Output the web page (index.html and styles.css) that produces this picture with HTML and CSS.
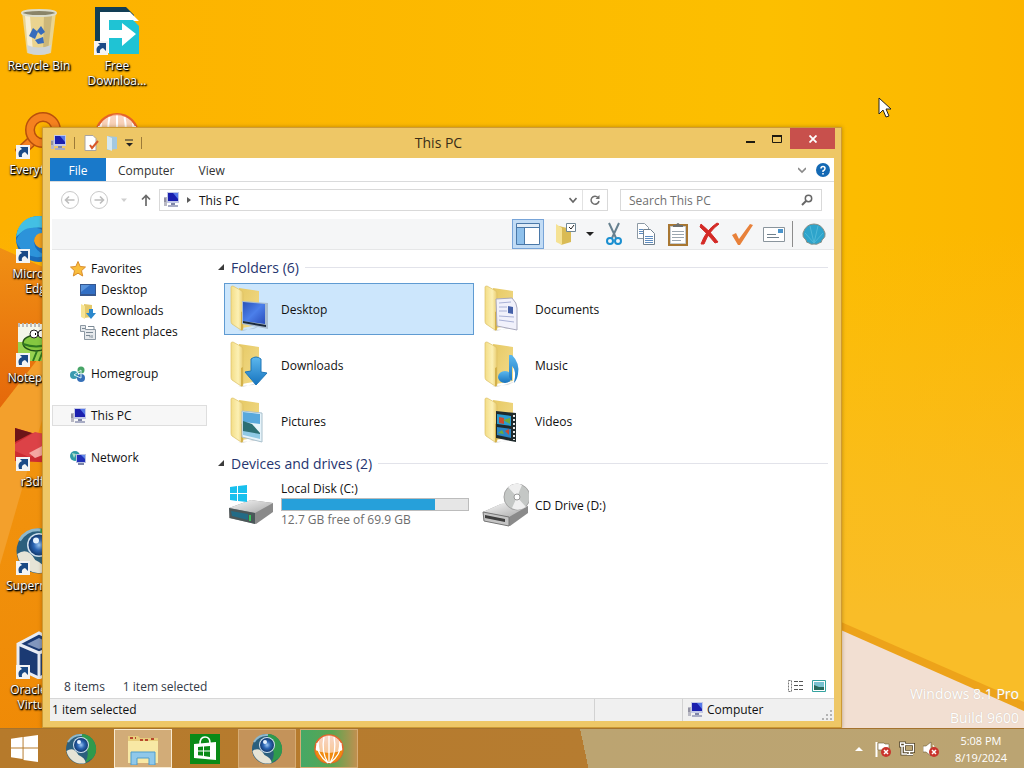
FILE: index.html
```html
<!DOCTYPE html>
<html lang="en">
<head>
    <meta charset="UTF-8">
    <meta name="viewport" content="width=device-width, initial-scale=1.0">
    <title>This PC</title>
    <link rel="stylesheet" href="styles.css">
</head>
<body>
    <!-- shared icons -->
    <svg class="defs" aria-hidden="true">
        <defs>
            <linearGradient id="gFolder" x1="0" x2="1" y1="0" y2="1">
                <stop offset="0" stop-color="#e6c964"/><stop offset="1" stop-color="#f3dc8c"/>
            </linearGradient>
            <linearGradient id="gFront" x1="0" x2="1" y1="0" y2="0">
                <stop offset="0" stop-color="#f3dd86"/><stop offset=".6" stop-color="#fcf0b4"/><stop offset="1" stop-color="#e9cd70"/>
            </linearGradient>
            <linearGradient id="gScreen" x1="0" x2="1" y1="0" y2="1">
                <stop offset="0" stop-color="#2a52b8"/><stop offset=".5" stop-color="#4b7fea"/><stop offset="1" stop-color="#2a4dba"/>
            </linearGradient>
            <linearGradient id="gBlue" x1="0" x2="0" y1="0" y2="1">
                <stop offset="0" stop-color="#5cb8ee"/><stop offset="1" stop-color="#1673be"/>
            </linearGradient>
            <linearGradient id="gMetal" x1="0" x2="1" y1="0" y2="1">
                <stop offset="0" stop-color="#f8f8f8"/><stop offset="1" stop-color="#a8a8a8"/>
            </linearGradient>
            <linearGradient id="gComet" x1="0" x2="0" y1="0" y2="1">
                <stop offset="0" stop-color="#f3b49a"/><stop offset="1" stop-color="#f08a10"/>
            </linearGradient>
            <radialGradient id="gEye">
                <stop offset="0" stop-color="#9cc8f4"/><stop offset=".5" stop-color="#2c66b4"/><stop offset="1" stop-color="#123a70"/>
            </radialGradient>
        </defs>
        <symbol id="pc" viewBox="0 0 16 16">
            <path d="M1 5h3v9H1z" fill="#b9b9c4"/><path d="M1 7h2M1 9h2" stroke="#6b6b80"/>
            <path d="M4 0h12v11H4z" fill="#c3c9e6"/><path d="M5 1h10v8H5z" fill="#1a1fae"/>
            <path d="M10 1h5v6z" fill="#5577e8"/>
            <path d="M8 11h4v2H8z" fill="#7f86a8"/><path d="M5 13h10v2H5z" fill="#a8acc4"/>
        </symbol>
        <symbol id="folder" viewBox="0 0 40 48">
            <path d="M9 45l16-1 8-4-19 6z" fill="#000" opacity=".12"/>
            <path d="M10 3l20 3v34l-17 3z" fill="url(#gFolder)"/>
            <path d="M2 2q0-1 2-1l9 5q1 1 1 3v34q0 3-2 2L3 39q-1-1-1-3z" fill="url(#gFront)" stroke="#dcc065" stroke-width=".7"/>
            <path d="M12 27l2-1v17q0 3-2 2z" fill="#d3b04a"/>
        </symbol>
        <symbol id="orb" viewBox="0 0 32 32">
            <circle cx="16" cy="16" r="15" fill="#2b5f7d"/>
            <path d="M16 1a15 15 0 0 1 12 24l-8 5q5-9 1-15z" fill="#2f9a4c"/>
            <path d="M1.500 18q7-5 12 4 7 3 7 8A15 15 0 0 1 1.500 18z" fill="#e6e4d6"/>
            <path d="M3 9q5-8 14-7" stroke="#8fb8cc" stroke-width="2" fill="none"/>
            <circle cx="16" cy="12" r="8" fill="#cfe0ee"/>
            <circle cx="16" cy="12" r="7" fill="url(#gEye)"/>
            <circle cx="14" cy="9" r="2" fill="#e6f3ff"/>
        </symbol>
        <symbol id="comet" viewBox="0 0 32 32">
            <circle cx="16" cy="16" r="14" fill="#fff" stroke="#e5632a" stroke-width="1.500"/>
            <path d="M16 30C8 24 5 16 6 7q6-5 10-5t10 5c1 9-2 17-10 23z" fill="url(#gComet)" opacity=".55"/>
            <path d="M2 17q14 6 28 0-2 12-14 13Q4 29 2 17z" fill="#f08a10"/>
            <path d="M15 30C7 24 4 17 4 10M15 30C10 22 9 14 11 4M16 30V3M17 30c5-8 6-16 4-26M17 30c8-6 11-13 11-20" stroke="#fff" stroke-width="1.300" fill="none"/>
        </symbol>
        <symbol id="shortcut" viewBox="0 0 14 14">
            <path d="M0 0h14v14H0z" fill="#f4f4f4"/>
            <path d="M3 12q-2-6 3-8L4 2h8v8L9 7q-4 1-3 5z" fill="#1b4a86"/>
        </symbol>
        <symbol id="winlogo" viewBox="0 0 28 28">
            <path d="M0 4l12-2v11H0zM13 2l15-2v13H13zM0 14h12v11L0 23zM13 14h15v14l-15-2z" fill="currentColor"/>
        </symbol>
        <symbol id="badge" viewBox="0 0 10 10">
            <circle cx="5" cy="5" r="5" fill="#c9342c"/><path d="M3 3l4 4M7 3L3 7" stroke="#fff" stroke-width="1.500"/>
        </symbol>
    </svg>

    <svg class="wallpaper" viewBox="0 0 1024 768" preserveAspectRatio="none" aria-hidden="true">
        <defs>
            <linearGradient id="gWall" x1="0" x2="1" y1="0" y2="0">
                <stop offset="0" stop-color="#fdb100"/><stop offset=".75" stop-color="#fcbf00"/><stop offset="1" stop-color="#fcb600"/>
            </linearGradient>
            <linearGradient id="gLow" x1="0" x2="0" y1="0" y2="1">
                <stop offset=".3" stop-color="#f9bd28" stop-opacity="0"/><stop offset=".8" stop-color="#f9bd28"/>
            </linearGradient>
            <linearGradient id="gDark" x1="0" x2="0" y1="0" y2="1">
                <stop offset="0" stop-color="#f09014"/><stop offset="1" stop-color="#e5680a"/>
            </linearGradient>
            <linearGradient id="gLeft" x1="0" x2="0" y1="0" y2="1">
                <stop offset="0" stop-color="#f39a14"/><stop offset="1" stop-color="#ef8905"/>
            </linearGradient>
        </defs>
        <rect width="1024" height="768" fill="url(#gWall)"/>
        <rect width="1024" height="768" fill="url(#gLow)"/>
        <path d="M0 248L45 268V768H0z" fill="url(#gLeft)"/>
        <path d="M0 248L45 268V350L0 408z" fill="url(#gDark)"/>
        <path d="M0 408L45 350V410L0 565z" fill="#f3a02c"/>
        <path d="M800 604L1024 702V768H800z" fill="#eda31a"/>
        <path d="M800 612L1024 711V768H800z" fill="#f2dfd2"/>
    </svg>

    <main class="desktop">
        <div class="desktop-icons">
            <a href="#" class="shortcut">
                <span class="pic"><svg viewBox="0 0 48 48">
                    <path d="M7 5h34l-5 41q-12 4-24 0z" fill="#e6d9a8" opacity=".85"/>
                    <path d="M29 8l8 1-4 35-5 2z" fill="#b8a46a" opacity=".6"/>
                    <path d="M10 8l5 1 3 36-5-1z" fill="#fff" opacity=".6"/>
                    <path d="M12 38q12 5 24 0l-1 8q-11 4-22 0z" fill="#cfd4d6"/>
                    <ellipse cx="24" cy="6" rx="17" ry="3" fill="#8a8468" stroke="#dcdccb" stroke-width="2"/>
                    <path d="M14 29l4-8 5 4-3 7zM22 24l4-5 4 6-4 3zM20 33l8-3 1 6-6 1z" fill="#376cbc"/>
                </svg></span>
                <span class="name">Recycle Bin</span>
            </a>
            <a href="#" class="shortcut">
                <span class="pic"><svg viewBox="0 0 48 48">
                    <path d="M2 0h31l8 8v8H16v24H2z" fill="#123e55"/>
                    <path d="M7 5h30l9 9H16v32H7z" fill="#fff"/>
                    <path d="M16 13h24l6 6v28H16z" fill="#1fc3d4"/>
                    <path d="M14 23h15v-7l14 11-14 12v-8H14z" fill="#fff"/>
                </svg><svg class="arrow"><use href="#shortcut"/></svg></span>
                <span class="name">Free Downloa...</span>
            </a>
            <a href="#" class="shortcut">
                <span class="pic"><svg viewBox="0 0 48 48">
                    <path d="M18 29L3 43" stroke="#b8500c" stroke-width="11"/><path d="M18 29L3 43" stroke="#f5811f" stroke-width="8"/>
                    <circle cx="28" cy="19" r="13" fill="none" stroke="#b8500c" stroke-width="10"/>
                    <circle cx="28" cy="19" r="13" fill="none" stroke="#f5811f" stroke-width="7"/>
                </svg><svg class="arrow"><use href="#shortcut"/></svg></span>
                <span class="name">Everything</span>
            </a>
            <a href="#" class="shortcut">
                <span class="pic"><svg viewBox="0 0 48 48">
                    <circle cx="24" cy="24" r="23" fill="#1a6cbb"/>
                    <path d="M1 22Q4 1 25 1q20 2 22 22-1-10-16-10Q12 10 1 22z" fill="#43c0e4"/>
                    <path d="M1 26Q6 11 22 13q7 1 7 6-10-1-10 8 1 10 12 13-10 5-19-1-8-5-11-13z" fill="#2c93da"/>
                    <path d="M19 26q1-9 10-8 8 2 8 9 0 4-5 4-2 0-3 2-8 1-10-7z" fill="#f3a01c"/>
                </svg><svg class="arrow"><use href="#shortcut"/></svg></span>
                <span class="name">Microsoft Edge</span>
            </a>
            <a href="#" class="shortcut">
                <span class="pic"><svg viewBox="0 0 48 48">
                    <path d="M3 5h41v37H3z" fill="#f4f6ea"/><path d="M3 23h41v19H3z" fill="#98d250"/>
                    <path d="M3 6h41" stroke="#bbb" stroke-width="4" stroke-dasharray="2 2"/>
                    <ellipse cx="21" cy="24" rx="13" ry="8" fill="#85c840" stroke="#224f18" stroke-width="1.500"/>
                    <circle cx="19" cy="15" r="4" fill="#fff" stroke="#222"/><circle cx="27" cy="15" r="4" fill="#fff" stroke="#222"/>
                    <path d="M20 15h1M28 15h1" stroke="#000" stroke-width="2"/>
                    <path d="M8 25q14 5 25 0M18 42l4-10M24 42l4-10M31 42l3-9" stroke="#2e7820" stroke-width="2" fill="none"/>
                </svg><svg class="arrow"><use href="#shortcut"/></svg></span>
                <span class="name">Notepad++</span>
            </a>
            <a href="#" class="shortcut">
                <span class="pic"><svg viewBox="0 0 48 48">
                    <path d="M0 5l17 5 29 2v28L0 38z" fill="#cc2c32"/>
                    <path d="M0 5l17 5-17 9z" fill="#6c1518"/><path d="M0 21l20-12 26 6v8L14 34 0 28z" fill="#dc4247"/>
                    <path d="M14 30l32-17v12l-26 10z" fill="#f4a7a1"/>
                </svg><svg class="arrow"><use href="#shortcut"/></svg></span>
                <span class="name">r3dfox</span>
            </a>
            <a href="#" class="shortcut">
                <span class="pic"><svg><use href="#orb"/></svg><svg class="arrow"><use href="#shortcut"/></svg></span>
                <span class="name">Supermium</span>
            </a>
            <a href="#" class="shortcut">
                <span class="pic"><svg viewBox="0 0 48 48">
                    <path d="M3 13L24 2l21 11v24L24 47 3 37z" fill="#1b3a73" stroke="#e8ecf4" stroke-width="3"/>
                    <path d="M3 13l21 9 21-9M24 22v25" stroke="#e8ecf4" stroke-width="3" fill="none"/>
                    <path d="M12 13l12-6 12 6-12 5z" fill="#8196bd"/>
                </svg><svg class="arrow"><use href="#shortcut"/></svg></span>
                <span class="name">Oracle VM Virtua...</span>
            </a>
            <a href="#" class="shortcut second" aria-label="BitComet">
                <span class="pic"><svg><use href="#comet"/></svg></span>
            </a>
        </div>

        <div class="watermark">Windows 8.1 Pro<br>Build 9600</div>

        <section class="window">
            <header class="titlebar">
                <div class="quick">
                    <svg class="i16"><use href="#pc"/></svg>
                    <span class="bar"></span>
                    <button aria-label="Properties"><svg class="i16" viewBox="0 0 16 16"><path d="M2 .5h8l3 3v12H2z" fill="#fff" stroke="#a9a4a0"/><path d="M7 10l2 3 6-7" stroke="#d8572a" stroke-width="2" fill="none"/></svg></button>
                    <button aria-label="New folder"><svg class="i16" viewBox="0 0 16 16"><path d="M3 1l10 1v12l-10 1z" fill="#a3c8e0"/><path d="M3 1l5 2v13l-5-2z" fill="#d4e8f2"/></svg></button>
                    <button aria-label="Customize"><svg class="i8" viewBox="0 0 8 8"><path d="M0 1h8" stroke="#222" /><path d="M1 4h7L4.500 7.500z" fill="#222"/></svg></button>
                    <span class="bar"></span>
                </div>
                <h1>This PC</h1>
                <div class="caption">
                    <button aria-label="Minimize"><svg class="i12" viewBox="0 0 12 12"><path d="M2 9h9" stroke="#1e1a10" stroke-width="2"/></svg></button>
                    <button aria-label="Maximize"><svg class="i12" viewBox="0 0 12 12"><path d="M1.500 2.500h9v7h-9z" fill="none" stroke="#1e1a10"/><path d="M1 3h10" stroke="#1e1a10" stroke-width="2"/></svg></button>
                    <button class="close" aria-label="Close"><svg class="i8" viewBox="0 0 8 8"><path d="M.5.5l7 7M7.500.5l-7 7" stroke="#fff" stroke-width="1.800"/></svg></button>
                </div>
            </header>

            <div class="client">
                <div class="tabs">
                    <button class="file">File</button>
                    <button>Computer</button>
                    <button>View</button>
                    <span class="tab-end">
                        <button aria-label="Expand ribbon"><svg class="i8" viewBox="0 0 8 8"><path d="M0 2l4 4 4-4" fill="none" stroke="#8a8a8a" stroke-width="1.600"/></svg></button>
                        <button aria-label="Help"><svg class="i14" viewBox="0 0 14 14"><circle cx="7" cy="7" r="7" fill="#1469b4"/><path d="M5 5.500Q5 3.500 7 3.500t2 2Q9 7 7 8v1M7 10v1.500" fill="none" stroke="#fff" stroke-width="1.500"/></svg></button>
                    </span>
                </div>

                <div class="navrow">
                    <button aria-label="Back"><svg class="i20" viewBox="0 0 20 20"><circle cx="10" cy="10" r="8.500" fill="none" stroke="#c9c9c9"/><path d="M14.500 10h-9M9 6.500L5.500 10 9 13.500" fill="none" stroke="#bdbdbd" stroke-width="1.600"/></svg></button>
                    <button aria-label="Forward"><svg class="i20" viewBox="0 0 20 20"><circle cx="10" cy="10" r="8.500" fill="none" stroke="#c9c9c9"/><path d="M5.500 10h9M11 6.500l3.500 3.500-3.500 3.500" fill="none" stroke="#bdbdbd" stroke-width="1.600"/></svg></button>
                    <button class="recent" aria-label="Recent locations"><svg class="i8" viewBox="0 0 8 8"><path d="M1 2.500h6L4 6z" fill="#cfcfcf"/></svg></button>
                    <button class="up" aria-label="Up"><svg class="i14" viewBox="0 0 14 14"><path d="M7 13V2.500M3 6.500l4-4 4 4" fill="none" stroke="#6a6a6a" stroke-width="1.700"/></svg></button>
                    <div class="address">
                        <svg class="i16"><use href="#pc"/></svg>
                        <svg class="i8" viewBox="0 0 8 8"><path d="M2 1l4 3-4 3z" fill="#5a5a5a"/></svg>
                        <a href="#">This PC</a>
                        <button class="drop" aria-label="Previous locations"><svg class="i8" viewBox="0 0 8 8"><path d="M.5 2L4 6l3.500-4" fill="none" stroke="#666" stroke-width="1.600"/></svg></button>
                        <button class="refresh" aria-label="Refresh"><svg class="i12" viewBox="0 0 12 12"><path d="M9 3.500A4 4 0 1 0 10 7" fill="none" stroke="#6f6f6f" stroke-width="1.500"/><path d="M10.500 1v4h-4z" fill="#6f6f6f"/></svg></button>
                    </div>
                    <label class="search">
                        <input type="text" placeholder="Search This PC" aria-label="Search This PC">
                        <svg class="i12" viewBox="0 0 12 12"><circle cx="7.500" cy="4.500" r="3.200" fill="none" stroke="#666" stroke-width="1.500"/><path d="M5 7L1 11" stroke="#666" stroke-width="2"/></svg>
                    </label>
                </div>

                <div class="toolbar">
                    <button class="pressed" aria-label="Navigation pane"><svg viewBox="0 0 24 24"><path d="M.5 1.500h23v21H.5z" fill="#fff" stroke="#4a78a8"/><path d="M1 5.500h22M8.500 6v16" stroke="#4a78a8"/><path d="M1 6h7v16H1z" fill="#8fc1ec"/><path d="M1 2h22v3H1z" fill="#e0ecf7"/></svg></button>
                    <button aria-label="Select"><svg viewBox="0 0 24 24"><path d="M5 4l12 3v13l-10 3z" fill="#d9bb55"/><path d="M2 2l6 4v17l-6-3z" fill="#f5e294"/><path d="M12.500 1.500h9v8h-9z" fill="#fff" stroke="#6f8694"/><path d="M15 5l2 2 3-4" fill="none" stroke="#222"/></svg></button>
                    <button class="more" aria-label="More select options"><svg class="i8" viewBox="0 0 8 8"><path d="M0 2h8L4 6z" fill="#222"/></svg></button>
                    <button aria-label="Cut"><svg viewBox="0 0 24 24"><path d="M7 1l7 15M17 1l-7 15" stroke="#66808f" stroke-width="2"/><circle cx="8" cy="19" r="3" fill="none" stroke="#1a8fd0" stroke-width="2"/><circle cx="16" cy="19" r="3" fill="none" stroke="#1a8fd0" stroke-width="2"/></svg></button>
                    <button aria-label="Copy"><svg viewBox="0 0 24 24"><path d="M3.500 1.500h7l4 4v11h-11z" fill="#fff" stroke="#8d9aa5"/><path d="M9.500 7.500h7l4 4v11h-11z" fill="#fff" stroke="#71818e"/><path d="M5 7.500h4M5 9.500h4M5 11.500h4M11 14.500h8M11 16.500h8M11 18.500h8M11 20.500h8" stroke="#5d8cc0"/></svg></button>
                    <button aria-label="Paste"><svg viewBox="0 0 24 24"><path d="M2 2h20v22H2z" fill="#a87732"/><path d="M4.500 4.500h15v17h-15z" fill="#fff" stroke="#c5ccd2"/><path d="M7 5V3h3q2-4 4 0h3v2z" fill="#6e706e"/><path d="M6 9.500h12M6 12.500h12M6 15.500h12M6 18.500h9" stroke="#9aa6b0"/></svg></button>
                    <button aria-label="Delete"><svg viewBox="0 0 24 24"><path d="M3 2q9 7 17 18l-3 1Q10 12 2 5zM21 2Q11 9 6 22H3Q8 8 19 1z" fill="#d42a26" stroke="#d42a26"/></svg></button>
                    <button aria-label="Rename"><svg viewBox="0 0 24 24"><path d="M2 13l4-2 3 6L20 2l3 1-13 20H8z" fill="#e8813a"/></svg></button>
                    <button aria-label="Properties"><svg viewBox="0 0 24 24"><path d="M1.500 5.500h21v14h-21z" fill="#fff" stroke="#8a959d"/><path d="M16 7h5v4h-5z" fill="#4a94cc"/><path d="M5 12.500h9M5 15.500h12" stroke="#6f7f8b"/></svg></button>
                    <span class="rule"></span>
                    <button aria-label="Classic Shell settings"><svg viewBox="0 0 24 24"><path d="M7 21q-3 0-3-3-4-3-3-7Q4 2 12 2t11 9q1 4-3 7 0 3-3 3-2 2-5 1-3 1-5-1z" fill="#2ea4cb" stroke="#8b8f86"/><path d="M12 21L3 11M12 21L8 4M12 21l4-17M12 21l9-10" stroke="#4fb8d8"/></svg></button>
                </div>

                <div class="content">
                    <nav class="sidebar">
                        <ul>
                            <li><a href="#"><svg class="i16" viewBox="0 0 16 16"><path d="M8 .5l2.200 5 5.300.5-4 3.700 1.200 5.300L8 12.200 3.300 15l1.200-5.300L.5 6l5.300-.5z" fill="#f9bd3c" stroke="#d98c2b"/></svg>Favorites</a></li>
                            <li class="sub"><a href="#"><svg class="i16" viewBox="0 0 16 16"><path d="M0 2h16v12H0z" fill="#36578f"/><path d="M1 3h14v9H1z" fill="#326fc4"/><path d="M1 3h9l-9 7z" fill="#5a94dc"/></svg>Desktop</a></li>
                            <li class="sub"><a href="#"><svg class="i16" viewBox="0 0 16 16"><path d="M4 1l8 1v12l-8 1z" fill="#e4c869"/><path d="M1 1l4 2v13l-4-2z" fill="#f7e493"/><path d="M9 6h4v4h3l-5 6-5-6h3z" fill="#2c88cc"/></svg>Downloads</a></li>
                            <li class="sub"><a href="#"><svg class="i16" viewBox="0 0 16 16"><path d="M.5 1.500h5v4h10v10h-11v-8h-4z" fill="#e6e9ec" stroke="#8c98a3"/><path d="M6 8.500h7M6 11.500h4v2M12 11v3M8 2.500h6v3M2 4.500h3" stroke="#7b8995" fill="none"/></svg>Recent places</a></li>
                        </ul>
                        <ul><li><a href="#"><svg class="i16" viewBox="0 0 16 16"><circle cx="4" cy="9" r="4" fill="#3b9ab0"/><circle cx="11" cy="4" r="3.500" fill="#48a567"/><circle cx="11" cy="12" r="4" fill="#3670b8"/><path d="M4 9l7-5v8z" fill="none" stroke="#d4eef4"/></svg>Homegroup</a></li></ul>
                        <ul><li class="current"><a href="#"><svg class="i16"><use href="#pc"/></svg>This PC</a></li></ul>
                        <ul><li><a href="#"><svg class="i16" viewBox="0 0 16 16"><circle cx="5" cy="6" r="5" fill="#2e9aa6"/><path d="M2 3l4 1-2 4z" fill="#a8e0c8"/><path d="M6 4h10v9H6z" fill="#b8c0e0"/><path d="M7 5h8v7H7z" fill="#2130b8"/><path d="M11 5h4v4z" fill="#5f86ea"/><path d="M8 14h6" stroke="#7b84a8" stroke-width="2"/></svg>Network</a></li></ul>
                    </nav>

                    <div class="files">
                        <h2><svg class="i8" viewBox="0 0 8 8"><path d="M7 1v6H1z" fill="#3b3b3b"/></svg>Folders (6)</h2>
                        <div class="tiles">
                            <a href="#" class="tile selected">
                                <span class="thumb"><svg viewBox="0 0 40 48"><use href="#folder" width="40" height="48"/><path d="M13 16l26 2v26l-26-5z" fill="#a9bdd0"/><path d="M14 17l22 2v20l-22-3z" fill="url(#gScreen)"/><path d="M14 36l23 4v2l-23-4z" fill="#1a2a3c"/></svg></span>
                                Desktop
                            </a>
                            <a href="#" class="tile">
                                <span class="thumb"><svg viewBox="0 0 40 48"><use href="#folder" width="40" height="48"/><path d="M13 14l16-1q5 5 5 10v22l-20-4z" fill="#f1f1fb" stroke="#a9a9bd"/><path d="M16 18l12-1M16 22h8M16 26h8M16 31l15 1M16 35l15 2" stroke="#a9b1d6"/><path d="M25 21l5 1v7l-5-1z" fill="#4560a8"/></svg></span>
                                Documents
                            </a>
                            <a href="#" class="tile">
                                <span class="thumb"><svg viewBox="0 0 40 48"><use href="#folder" width="40" height="48"/><path d="M22 18q5-4 10 0v13l6 1-11 12-11-13 6-1z" fill="url(#gBlue)" stroke="#1f77b8"/></svg></span>
                                Downloads
                            </a>
                            <a href="#" class="tile">
                                <span class="thumb"><svg viewBox="0 0 40 48"><use href="#folder" width="40" height="48"/><ellipse cx="22" cy="36" rx="7" ry="6" fill="url(#gBlue)"/><path d="M26 36V14h3q8 8 6 19-1 6-4 9 3-12-2-17v15z" fill="url(#gBlue)"/></svg></span>
                                Music
                            </a>
                            <a href="#" class="tile">
                                <span class="thumb"><svg viewBox="0 0 40 48"><use href="#folder" width="40" height="48"/><path d="M13 14l20 2v29l-20-5z" fill="#e6f3fa" stroke="#a9c0cc"/><path d="M14 15l17 2v10l-17-2z" fill="#58a8dc"/><path d="M14 24l9 3 8 9v5l-17-4z" fill="#2c6f74"/><path d="M14 34l17 3v5l-17-4z" fill="#8fc9e4"/></svg></span>
                                Pictures
                            </a>
                            <a href="#" class="tile">
                                <span class="thumb"><svg viewBox="0 0 40 48"><use href="#folder" width="40" height="48"/><path d="M13 14l20 2v29l-20-4z" fill="#1f2a2c"/><path d="M14 17l14 2v10l-14-2z" fill="#2b9ccf"/><path d="M14 30l14 2v9l-14-3z" fill="#2b86c4"/><path d="M16 20l5 1v6l-5-1zM22 34l4-2v6z" fill="#c94a2e"/><path d="M20 23l7-2v6zM15 36l4-3 2 4z" fill="#6cab3d"/><path d="M31 18v25" stroke="#e8e8e8" stroke-width="2" stroke-dasharray="2 2"/></svg></span>
                                Videos
                            </a>
                        </div>
                        <h2><svg class="i8" viewBox="0 0 8 8"><path d="M7 1v6H1z" fill="#3b3b3b"/></svg>Devices and drives (2)</h2>
                        <div class="tiles">
                            <a href="#" class="tile drive">
                                <span class="thumb"><svg viewBox="0 0 48 48"><path d="M2 27l22-8 22 3v9L29 43 2 37z" fill="#8a8a8a"/><path d="M2 27l22-8 22 3-18 10z" fill="url(#gMetal)"/><path d="M2 27l26 5v11L3 37z" fill="#4b5759"/><path d="M4 30l17 3v6L5 35z" fill="#236b86"/><path d="M23 34v6" stroke="#36c25a" stroke-width="2"/><path d="M3 6l7-1v7H3zM11 5l9-1v8h-9zM3 13h7v7l-7-1zM11 13h9v8l-9-1z" fill="#18c0ee"/></svg></span>
                                <span class="info">
                                    <span>Local Disk (C:)</span>
                                    <span class="usage"><span class="used" style="width: 82%"></span></span>
                                    <span class="free">12.7 GB free of 69.9 GB</span>
                                </span>
                            </a>
                            <a href="#" class="tile drive">
                                <span class="thumb"><svg viewBox="0 0 48 48"><path d="M2 31l18-8 27 2v7L29 45 3 40z" fill="#8a8a8a"/><path d="M2 31l20-9 25 3-19 11z" fill="url(#gMetal)"/><path d="M2 31l26 5v9L3 40z" fill="#c4c4c4" stroke="#777"/><path d="M4 34l20 4v3L4 37z" fill="#3e3e3e"/><circle cx="36" cy="16" r="13" fill="#c4c7c5" stroke="#a3a3a3"/><path d="M36 16L27 6q8-6 14-2zM36 16l9 10q-8 5-14 1z" fill="#efefef"/><circle cx="36" cy="16" r="3" fill="#fff" stroke="#999"/></svg></span>
                                CD Drive (D:)
                            </a>
                        </div>
                    </div>
                </div>

                <div class="details">
                    <span>8 items</span>
                    <span>1 item selected</span>
                    <span class="views">
                        <button aria-label="Details view"><svg class="i16" viewBox="0 0 16 16"><path d="M.5 2.500h3v11h-3z" fill="#fff" stroke="#777" stroke-dasharray="2 1"/><path d="M6 3.500h10M6 7.500h10M6 11.500h10" stroke="#555" stroke-dasharray="4 1"/></svg></button>
                        <button aria-label="Large icons view"><svg class="i14" viewBox="0 0 14 14"><path d="M.5 1.500h13v11H.5z" fill="#fff" stroke="#35a3a0"/><path d="M2 3h10v5H2z" fill="#79c2d0"/><path d="M2 6l5 2h5v3H2z" fill="#276a5c"/></svg></button>
                    </span>
                </div>
                <footer class="status">
                    <span class="msg">1 item selected</span>
                    <span class="cell"></span>
                    <span class="cell zone"><svg class="i16"><use href="#pc"/></svg>Computer</span>
                    <svg class="i12 grip" viewBox="0 0 12 12"><path d="M9 1v2M9 5v2M9 9v2M5 5v2M5 9v2M1 9v2" stroke="#b4b4b4" stroke-width="2"/></svg>
                </footer>
            </div>
        </section>

        <svg class="cursor" viewBox="0 0 14 22"><path d="M1 1v16l4-4 3 7 3-1-3-7h5z" fill="#fff" stroke="#222"/></svg>
    </main>

    <footer class="taskbar">
        <button class="start" aria-label="Start"><svg><use href="#winlogo"/></svg></button>
        <button class="task" aria-label="Supermium"><svg><use href="#orb"/></svg></button>
        <button class="task open active" aria-label="File Explorer"><svg viewBox="0 0 32 32"><path d="M1 3h10l2 2h18v25H1z" fill="#e8cd7c"/><path d="M1 8h30v22H1z" fill="#f8e8a4"/><path d="M3 5h6M13 7h8M24 6h5" stroke="#b8482c" stroke-width="2" stroke-dasharray="3 2"/><path d="M4 32V19h24v13h-6v-7H10v7z" fill="#8fc8ea" stroke="#4e9dcc"/></svg></button>
        <button class="task" aria-label="Store"><svg viewBox="0 0 32 32"><path d="M1 1h30v30H1z" fill="#0a8a17"/><path d="M5 11l22-2v18L5 25z" fill="#fff"/><path d="M11 11q0-7 5-7t5 6" fill="none" stroke="#fff" stroke-width="1.600"/><path d="M9 14l5-.5v4H9zM15 13.500l6-.5v4.500h-6zM9 18.500h5v4.300l-5-.5zM15 18.500h6V24l-6-1z" fill="#0a8a17"/></svg></button>
        <button class="task open" aria-label="Supermium window"><svg><use href="#orb"/></svg></button>
        <button class="task open green" aria-label="BitComet"><svg><use href="#comet"/></svg></button>
        <div class="tray">
            <button aria-label="Show hidden icons"><svg class="i8" viewBox="0 0 8 8"><path d="M0 6h8L4 2z" fill="#fff"/></svg></button>
            <button aria-label="Action Center"><svg class="i16" viewBox="0 0 16 16"><path d="M1.500 1v15" stroke="#fff" stroke-width="2"/><path d="M3 2h6l1 1h4v7H9L8 9H3z" fill="#fff" stroke="#6c5a38" stroke-width=".6"/><use href="#badge" x="6" y="6" width="10" height="10"/></svg></button>
            <button aria-label="Network"><svg class="i16" viewBox="0 0 16 16"><path d="M5.500 3.500h9v7h-9zM8 13.500h6M10.500 10.500v3M1.500 2h4v3h-4zM3 5v8h5" fill="none" stroke="#554628" stroke-width="3"/><path d="M5.500 3.500h9v7h-9zM8 13.500h6M10.500 10.500v3M1.500 2h4v3h-4zM3 5v8h5" fill="none" stroke="#fff" stroke-width="1.300"/></svg></button>
            <button aria-label="Volume"><svg class="i16" viewBox="0 0 16 16"><path d="M0 5h3l5-4v14l-5-4H0z" fill="#fff" stroke="#6c5a38" stroke-width=".6"/><path d="M10 4q3 3 1 8" stroke="#fff" fill="none"/><use href="#badge" x="6" y="6" width="10" height="10"/></svg></button>
            <time class="clock">5:08 PM<br>8/19/2024</time>
        </div>
    </footer>
</body>
</html>
```
FILE: styles.css
```css
* {
    box-sizing: border-box;
    margin: 0;
    padding: 0;
}

body {
    display: flex;
    flex-direction: column;
    height: 100vh;
    overflow: hidden;
    font-family: "Open Sans", "Noto Sans", sans-serif;
    font-size: 12px;
    line-height: 15px;
    color: #111;
    background-color: #fdb900;
}

button {
    display: flex;
    align-items: center;
    justify-content: center;
    border: none;
    background: none;
    font: inherit;
    color: inherit;
}

a {
    color: inherit;
    text-decoration: none;
}

ul {
    list-style: none;
}

svg {
    display: block;
    flex-shrink: 0;
}

.defs {
    position: absolute;
    width: 0;
    height: 0;
}

.i8 { width: 8px; height: 8px; }
.i12 { width: 12px; height: 12px; }
.i14 { width: 14px; height: 14px; }
.i16 { width: 16px; height: 16px; }
.i20 { width: 20px; height: 20px; }

.wallpaper {
    position: absolute;
    width: 100%;
    height: 100%;
}

/* desktop */
.desktop {
    position: relative;
    flex: 1;
    min-height: 0;
}

.desktop-icons {
    display: grid;
    grid-template-rows: repeat(7, 104px);
    grid-auto-columns: 78px;
}

.shortcut {
    grid-column: 1;
    display: flex;
    flex-direction: column;
    align-items: center;
    gap: 3px;
    padding: 7px 6px 0;
    color: #fff;
    text-align: center;
    text-shadow: 1px 1px 2px #000, 0 1px 2px #000, 1px 1px 1px #000;
}

.shortcut:nth-child(2) {
    grid-column: 2;
    grid-row: 1;
}

.shortcut.second {
    grid-column: 2;
    grid-row: 2;
}

.pic {
    position: relative;
    width: 48px;
    height: 48px;
}

.pic svg {
    width: 48px;
    height: 48px;
}

.pic .arrow {
    position: absolute;
    left: 1px;
    bottom: 0;
    width: 14px;
    height: 14px;
}

.watermark {
    position: absolute;
    right: 5px;
    bottom: -2px;
    text-align: right;
    font-size: 14px;
    line-height: 24px;
    color: #fff;
    text-shadow: 0 0 1px #c8b8a8;
}

.cursor {
    position: absolute;
    left: 878px;
    top: 97px;
    width: 14px;
    height: 22px;
}

/* window */
.window {
    position: absolute;
    inset: 127px 182px 0 42px;
    display: flex;
    flex-direction: column;
    padding: 0 7px 6px;
    border: 1px solid #cd9a35;
    background-color: #eec766;
    box-shadow: 0 0 4px rgba(90, 60, 0, 0.4);
}

.titlebar {
    display: grid;
    grid-template-columns: 1fr auto 1fr;
    height: 30px;
    margin-right: -1px;
}

.titlebar h1 {
    padding-right: 8px;
    font-size: 14px;
    font-weight: normal;
    line-height: 30px;
    color: #3a2e18;
}

.quick {
    display: flex;
    align-items: center;
    gap: 5px;
}

.quick .bar {
    width: 1px;
    height: 12px;
    margin: 0 3px;
    background-color: #9c7a38;
}

.caption {
    display: flex;
    justify-content: flex-end;
    align-items: flex-start;
}

.caption button {
    width: 27px;
    height: 21px;
}

.caption .close {
    width: 45px;
    background-color: #c8504c;
}

.client {
    flex: 1;
    min-height: 0;
    display: flex;
    flex-direction: column;
    background-color: #fff;
}

.tabs {
    display: flex;
    height: 24px;
    border-bottom: 1px solid #dadbdc;
    color: #333;
}

.tabs button {
    padding: 2px 12px 0;
}

.tabs .file {
    width: 56px;
    background-color: #1979ca;
    color: #fff;
}

.tab-end {
    display: flex;
    gap: 10px;
    margin-left: auto;
    padding-right: 4px;
}

.tab-end button {
    padding: 0;
}

.navrow {
    display: flex;
    align-items: center;
    gap: 9px;
    height: 36px;
    padding: 0 12px 0 10px;
}

.recent {
    padding: 0 2px;
}

.address,
.search {
    display: flex;
    align-items: center;
    height: 22px;
    border: 1px solid #d9d9d9;
}

.address {
    flex: 1;
    gap: 6px;
    padding-left: 3px;
    margin: 0 3px 0 -3px;
}

.address .drop {
    width: 18px;
    height: 20px;
    margin-left: auto;
}

.address .refresh {
    width: 25px;
    height: 20px;
    margin-left: -6px;
    border-left: 1px solid #e2e2e2;
}

.search {
    width: 202px;
    padding: 0 8px;
}

.search input {
    flex: 1;
    min-width: 0;
    border: none;
    outline: none;
    background: none;
    font: inherit;
}

.search input::placeholder {
    color: #707070;
}

.toolbar {
    display: flex;
    justify-content: flex-end;
    align-items: center;
    height: 31px;
    margin: 1px 0 0 2px;
    padding-right: 4px;
    border-bottom: 1px solid #e6e7e8;
    background-color: #f5f6f7;
}

.toolbar button {
    width: 32px;
    height: 30px;
}

.toolbar svg {
    width: 24px;
    height: 24px;
}

.toolbar .pressed {
    border: 1px solid #77a4d8;
    background-color: #c2dcf5;
    margin-right: 6px;
}

.toolbar .more {
    width: 16px;
}

.toolbar .more svg {
    width: 8px;
    height: 8px;
}

.toolbar .rule {
    width: 1px;
    height: 26px;
    margin: 0 5px 0 2px;
    background-color: #8c8c8c;
}

/* content */
.content {
    flex: 1;
    min-height: 0;
    display: flex;
}

.sidebar {
    display: flex;
    flex-direction: column;
    gap: 21px;
    width: 163px;
    padding: 8px 6px 0 2px;
}

.sidebar a {
    display: flex;
    align-items: center;
    gap: 5px;
    height: 21px;
    padding-left: 18px;
}

.sidebar .sub a {
    padding-left: 28px;
}

.sidebar .current {
    background-color: #f7f7f7;
    box-shadow: inset 0 0 0 1px #dedede;
}

.files {
    flex: 1;
    padding: 1px 6px 0 4px;
}

.files h2 {
    display: flex;
    align-items: center;
    gap: 6px;
    height: 32px;
    font-size: 14px;
    font-weight: normal;
    color: #26356f;
}

.files h2::after {
    content: "";
    flex: 1;
    height: 1px;
    background-color: #e2e3ea;
}

.tiles {
    display: grid;
    grid-template-columns: 250px 250px;
    gap: 4px;
    padding-left: 7px;
}

.tile {
    display: flex;
    align-items: center;
    height: 52px;
    padding-left: 4px;
    border: 1px solid transparent;
}

.tile.selected {
    border-color: #5f9bd2;
    background-color: #cce6fc;
}

.thumb {
    width: 48px;
    margin-right: 4px;
}

.thumb svg {
    width: 40px;
    height: 48px;
}

.drive .thumb {
    margin-left: -2px;
    margin-right: 6px;
}

.drive .thumb svg {
    width: 48px;
}

.info {
    display: flex;
    flex-direction: column;
    width: 188px;
    padding-bottom: 2px;
}

.usage {
    height: 13px;
    margin: 2px 0 1px;
    border: 1px solid #bcbcbc;
    background-color: #e6e6e6;
}

.used {
    display: block;
    height: 100%;
    background-color: #26a0da;
}

.free {
    color: #6d6d6d;
}

.details {
    display: flex;
    align-items: center;
    gap: 18px;
    height: 24px;
    padding: 0 8px 0 14px;
    color: #333a48;
}

.views {
    display: flex;
    gap: 8px;
    margin-left: auto;
}

.status {
    display: flex;
    height: 23px;
    border-top: 1px solid #d7d7d7;
    background-color: #f0f0f0;
    line-height: 22px;
}

.msg {
    flex: 1;
    padding-left: 2px;
}

.cell {
    display: flex;
    align-items: center;
    gap: 4px;
    width: 88px;
    border-left: 1px solid #d2d2d2;
}

.zone {
    width: 140px;
    padding-left: 4px;
}

.grip {
    align-self: flex-end;
}

/* taskbar */
.taskbar {
    position: relative;
    display: flex;
    gap: 4px;
    height: 40px;
    border-top: 1px solid #a5732f;
    background: linear-gradient(78deg, #b67a2b 0, #b67c30 57%, #bca471 57%, #bba472 100%);
    color: #fff;
}

.start {
    width: 48px;
}

.start svg {
    width: 27px;
    height: 27px;
}

.task {
    width: 58px;
    border: 1px solid transparent;
}

.task svg {
    width: 32px;
    height: 32px;
}

.task.open {
    border-color: #d6ac74;
    background-color: #c4935a;
}

.task.active {
    border-color: #f8ead0;
    background-color: #d2ac78;
}

.task.green {
    background: linear-gradient(90deg, #45a866, #5aa550 55%, #c09050);
}

.tray {
    display: flex;
    align-items: center;
    gap: 8px;
    margin-left: auto;
    padding-right: 17px;
}

.tray button:first-child {
    margin-right: 4px;
}

.clock {
    margin-left: 8px;
    font-size: 11px;
    line-height: 17px;
    text-align: center;
}
```
